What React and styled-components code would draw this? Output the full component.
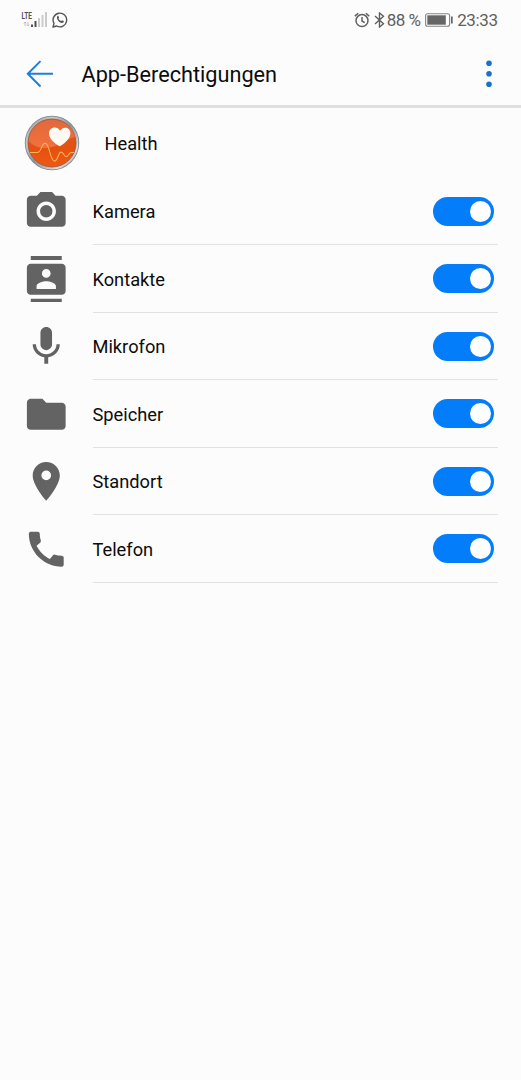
import React from "react";
import styled, { createGlobalStyle } from "styled-components";

const GlobalStyle = createGlobalStyle`
  * { box-sizing: border-box; }
  body { margin: 0; background: #fcfcfc; }
`;

const Screen = styled.main`
  min-height: 1080px;
  background: #fcfcfc;
  color: #0c0c0c;
  font-family: Roboto, "Liberation Sans", sans-serif;
`;

const StatusBar = styled.div`
  height: 40px;
  padding: 0 23px 0 21px;
  display: flex;
  justify-content: space-between;
  align-items: center;
  color: #606060;
`;

const StatusGroup = styled.div`
  display: flex;
  align-items: center;
  height: 40px;
`;

const StatusText = styled.span`
  width: ${(p) => p.$width}px;
  font-size: 17px;
  line-height: 20px;
  letter-spacing: ${(p) => p.$tracking}px;
  white-space: nowrap;
`;

const IconSlot = styled.span`
  display: flex;
  margin-right: ${(p) => p.$gap}px;
`;

const AppBar = styled.header`
  height: 68px;
  padding: 3px 29px 0 26px;
  display: flex;
  align-items: center;
  border-bottom: 3px solid #dfdfdf;
`;

const Title = styled.h1`
  flex: 1;
  margin: 2px 0 0 27.5px;
  font-size: 21.7px;
  line-height: 28px;
  font-weight: 400;
`;

const IconButton = styled.button`
  display: flex;
  padding: 0;
  border: 0;
  background: none;
`;

const AppRow = styled.section`
  height: 69.5px;
  padding-left: 24px;
  display: flex;
  align-items: center;
  gap: 24.5px;
`;

const Label = styled.span`
  font-size: 18.25px;
  line-height: 24px;
  padding-top: 3px;
`;

const List = styled.ul`
  list-style: none;
  margin: 0;
  padding: 0 23px;
`;

const Row = styled.li`
  height: 67.5px;
  display: flex;
  align-items: center;
  gap: 23px;
`;

const RowBody = styled.div`
  flex: 1;
  height: 100%;
  display: flex;
  align-items: center;
  justify-content: space-between;
  padding-right: 4.5px;
  border-bottom: 1px solid #e2e2e2;
`;

const Toggle = styled.button`
  width: 61px;
  height: 29px;
  margin-top: 1px;
  border: 0;
  border-radius: 15px;
  padding: 0 3px;
  display: flex;
  align-items: center;
  justify-content: ${(p) => (p.$on ? "flex-end" : "flex-start")};
  background: ${(p) => (p.$on ? "#047dfb" : "#bbb")};
`;

const Thumb = styled.span`
  width: 21px;
  height: 21px;
  border-radius: 50%;
  background: #fff;
`;

const permissions = [
  ["Kamera", "M9 2 7.17 4H4c-1.1 0-2 .9-2 2v12c0 1.1.9 2 2 2h16c1.1 0 2-.9 2-2V6c0-1.1-.9-2-2-2h-3.17L15 2H9zm3 15c-2.76 0-5-2.24-5-5s2.24-5 5-5 5 2.24 5 5-2.24 5-5 5zM12 8.8a3.2 3.2 0 1 0 0 6.4 3.2 3.2 0 0 0 0-6.4z"],
  ["Kontakte", "M20 0H4v2h16V0zM4 24h16v-2H4v2zM20 4H4c-1.1 0-2 .9-2 2v12c0 1.1.9 2 2 2h16c1.1 0 2-.9 2-2V6c0-1.1-.9-2-2-2zm-8 2.75c1.24 0 2.25 1.01 2.25 2.25s-1.01 2.25-2.25 2.25S9.75 10.24 9.75 9 10.76 6.75 12 6.75zM17 17H7v-1.5c0-1.67 3.33-2.5 5-2.5s5 .83 5 2.5V17z"],
  ["Mikrofon", "M12 14c1.66 0 2.99-1.34 2.99-3L15 5c0-1.66-1.34-3-3-3S9 3.34 9 5v6c0 1.66 1.34 3 3 3zm5.3-3c0 3-2.54 5.1-5.3 5.1S6.7 14 6.7 11H5c0 3.41 2.72 6.23 6 6.72V21h2v-3.28c3.28-.48 6-3.3 6-6.72h-1.7z"],
  ["Speicher", "M10 4H4c-1.1 0-1.99.9-1.99 2L2 18c0 1.1.9 2 2 2h16c1.1 0 2-.9 2-2V8c0-1.1-.9-2-2-2h-8l-2-2z"],
  ["Standort", "M12 2C8.13 2 5 5.13 5 9c0 5.25 7 13 7 13s7-7.75 7-13c0-3.87-3.13-7-7-7zm0 9.5a2.5 2.5 0 0 1 0-5 2.5 2.5 0 0 1 0 5z"],
  ["Telefon", "M20.01 15.38c-1.23 0-2.42-.2-3.53-.56-.35-.12-.74-.03-1.01.24l-1.57 1.97c-2.83-1.35-5.48-3.9-6.89-6.83l1.95-1.66c.27-.28.35-.67.24-1.02-.37-1.11-.56-2.3-.56-3.53 0-.54-.45-.99-.99-.99H4.19C3.65 3 3 3.24 3 3.99 3 13.28 10.73 21 20.01 21c.71 0 .99-.63.99-1.18v-3.45c0-.54-.45-.99-.99-.99z"],
];

function SignalIcon() {
  return (
    <svg width="27" height="18" viewBox="0 0 27 18">
      <text x="0.5" y="8" fontSize="9.6" fontWeight="700" fill="#505050" textLength="10.5" lengthAdjust="spacingAndGlyphs">LTE</text>
      <path d="M4 11v4M2.8 12.4 4 11l1.2 1.4M7 11v4m-1.2-1.4L7 15l1.2-1.4" fill="none" stroke="#bbb" strokeWidth="0.9" />
      <path d="M10 13.5h2V16h-2zM13.5 10h2v6h-2z" fill="#505050" />
      <path d="M17 7h2v9h-2zM20.5 4h2v12h-2zM24 1h2v15h-2z" fill="#cbcbcb" />
    </svg>
  );
}

function WhatsAppIcon() {
  return (
    <svg width="16" height="16" viewBox="0 0 16 16">
      <path d="M1 15l1-3.6A6.8 6.8 0 1 1 4.7 14z" fill="none" stroke="#565656" strokeWidth="1.4" strokeLinejoin="round" />
      <path d="M5.3 4.2c.5-.5 1-.4 1.2.1l.6 1.3c.1.3-.5.9-.6 1.1.5 1 1.4 1.8 2.5 2.4.3-.1.8-1 1.1-.9l1.5.7c.5.3.2 1.2-.3 1.6-2.7 2-7.7-3.2-6-6.3z" fill="#565656" />
    </svg>
  );
}

function AlarmIcon() {
  return (
    <svg width="16" height="16" viewBox="0 0 16 16" fill="none" stroke="#606060" strokeWidth="1.5">
      <circle cx="8" cy="8.6" r="6" />
      <path d="M8 5v4l2.7 1.6M.8 4.1 4.2 1.2M15.2 4.1l-3.4-2.9" />
    </svg>
  );
}

function BluetoothIcon() {
  return (
    <svg width="11" height="16" viewBox="0 0 11 16" fill="none" stroke="#606060" strokeWidth="1.4">
      <path d="M1 4l8.5 7.8L5.5 15V1l4 3.2L1 12" />
    </svg>
  );
}

function BatteryIcon() {
  return (
    <svg width="28" height="14" viewBox="0 0 28 14">
      <rect x="0.6" y="0.7" width="24" height="12.6" rx="2" fill="#fff" stroke="#858585" strokeWidth="1.1" />
      <path d="M2.3 2.3h18.5v9.4H2.3z" fill="#666" />
      <path d="M26 3.5h1.7v7H26z" fill="#666" />
    </svg>
  );
}

function HealthLogo() {
  return (
    <svg width="56" height="56" viewBox="0 0 56 56">
      <defs>
        <linearGradient id="rim" x1="0" y1="0" x2="1" y2="1">
          <stop offset="0" stopColor="#8b8f92" />
          <stop offset="0.25" stopColor="#c9c9c9" />
          <stop offset="0.5" stopColor="#8d9296" />
          <stop offset="0.8" stopColor="#dcdcdc" />
          <stop offset="1" stopColor="#888" />
        </linearGradient>
        <linearGradient id="orange" x1="0" y1="0" x2="0" y2="1">
          <stop offset="0" stopColor="#d95a30" />
          <stop offset="0.6" stopColor="#e5500f" />
          <stop offset="1" stopColor="#ee5a14" />
        </linearGradient>
        <linearGradient id="gloss" x1="0" y1="0" x2="0" y2="1">
          <stop offset="0" stopColor="#f58a61" stopOpacity="0.3" />
          <stop offset="1" stopColor="#f58a61" stopOpacity="0.6" />
        </linearGradient>
      </defs>
      <circle cx="28" cy="28" r="27.2" fill="#7c8185" />
      <circle cx="28" cy="28" r="25.3" fill="#b5a8a1" stroke="url(#rim)" strokeWidth="2.2" />
      <circle cx="28" cy="28" r="24" fill="url(#orange)" stroke="#a0543b" strokeWidth="0.8" />
      <path d="M4.8 26C5.5 14 15.5 4.8 28 4.8S50.5 14 51.2 22C42 24 34 33 21 33 14 33 8 30 4.8 26z" fill="url(#gloss)" />
      <path d="M6 37.5h7c5 0 4-9.2 8.3-9.2 4.2 0 4.8 17.8 9.2 17.8 3.5 0 3.5-9 6.7-9 2.8 0 2.4 4.5 5 4.5 2.3 0 2.5-4.1 5.3-4.1H50" fill="none" stroke="#f7b45b" strokeWidth="1.1" />
      <path d="M35.7 31.3C31 28.6 25 24 25 18.4c0-6.8 8.6-8 11-2.6 3.2-5 10.4-3.4 10.4 2.5 0 5.5-6 10.4-10.7 13z" fill="#fff9f3" />
    </svg>
  );
}

function PermissionIcon({ path }) {
  return (
    <svg width="46.5" height="46.5" viewBox="0 0 24 24" fill="#636363">
      <path fillRule="evenodd" d={path} />
    </svg>
  );
}

export default function App() {
  return (
    <Screen>
      <GlobalStyle />
      <StatusBar>
        <StatusGroup>
          <IconSlot $gap={4}><SignalIcon /></IconSlot>
          <WhatsAppIcon />
        </StatusGroup>
        <StatusGroup>
          <IconSlot $gap={3.5}><AlarmIcon /></IconSlot>
          <IconSlot $gap={2}><BluetoothIcon /></IconSlot>
          <StatusText $width={38} $tracking={-0.5}>88 %</StatusText>
          <IconSlot $gap={4.5}><BatteryIcon /></IconSlot>
          <StatusText $width={40.8} $tracking={-0.4}>23:33</StatusText>
        </StatusGroup>
      </StatusBar>
      <AppBar>
        <IconButton aria-label="Zurück">
          <svg width="28" height="28" viewBox="0 0 28 28" fill="none" stroke="#1c7fd8" strokeWidth="2">
            <path d="M27 13.8H2M14.5 1.1 1.8 13.8l12.7 12.7" />
          </svg>
        </IconButton>
        <Title>App-Berechtigungen</Title>
        <IconButton aria-label="Mehr">
          <svg width="6" height="28" viewBox="0 0 6 28" fill="#1673cc">
            <circle cx="3" cy="3.3" r="2.8" />
            <circle cx="3" cy="13.8" r="2.8" />
            <circle cx="3" cy="24.3" r="2.8" />
          </svg>
        </IconButton>
      </AppBar>
      <AppRow>
        <HealthLogo />
        <Label>Health</Label>
      </AppRow>
      <List>
        {permissions.map(([name, path]) => (
          <Row key={name}>
            <PermissionIcon path={path} />
            <RowBody>
              <Label>{name}</Label>
              <Toggle $on role="switch" aria-checked="true" aria-label={name}>
                <Thumb />
              </Toggle>
            </RowBody>
          </Row>
        ))}
      </List>
    </Screen>
  );
}
